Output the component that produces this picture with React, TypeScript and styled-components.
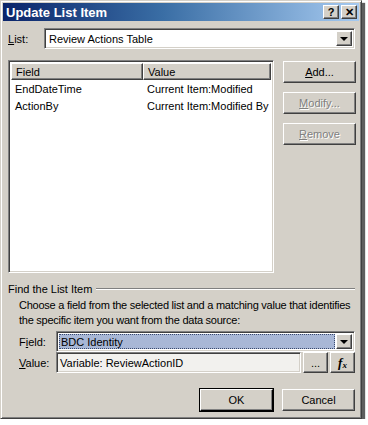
import React from 'react'
import styled, { createGlobalStyle, css } from 'styled-components'

const GlobalStyle = createGlobalStyle`
  html, body {
    margin: 0;
    padding: 0;
    background: #ffffff;
  }
  body {
    font-family: Tahoma, "Liberation Sans", Arial, sans-serif;
    font-size: 11px;
    color: #000;
  }
`

const raised = css`
  border: 1px solid;
  border-color: #ffffff #404040 #404040 #ffffff;
  box-shadow: inset -1px -1px 0 #808080, inset 1px 1px 0 #d4d0c8;
`

const sunken = css`
  border: 1px solid;
  border-color: #808080 #ffffff #ffffff #808080;
  box-shadow: inset 1px 1px 0 #404040, inset -1px -1px 0 #d4d0c8;
`

const Window = styled.div`
  width: 362px;
  height: 419px;
  box-sizing: border-box;
  background: #d4d0c8;
  border: 1px solid;
  border-color: #d4d0c8 #404040 #404040 #d4d0c8;
  box-shadow: inset 1px 1px 0 #ffffff, inset -1px -1px 0 #808080, 3px 3px 1px rgba(40, 40, 40, 0.75);
  padding: 2px;
  display: flex;
  flex-direction: column;
  overflow: hidden;
`

const TitleBar = styled.div`
  height: 18px;
  flex: none;
  background: linear-gradient(to right, #0a246a 0%, #3a6ea5 45%, #a6caf0 100%);
  display: flex;
  align-items: center;
  padding: 0 2px 0 3px;
`

const Title = styled.div`
  flex: 1;
  color: #ffffff;
  font-weight: bold;
  font-size: 13px;
`

const CaptionButton = styled.div`
  ${raised};
  width: 16px;
  height: 14px;
  box-sizing: border-box;
  margin-left: 2px;
  background: #d4d0c8;
  display: flex;
  align-items: center;
  justify-content: center;
  font-weight: bold;
  font-size: 11px;
  line-height: 1;
`

const Body = styled.div`
  flex: 1;
  display: flex;
  flex-direction: column;
  padding: 7px 4px 0 5px;
`

const Row = styled.div<{ $indent?: number; $top?: number }>`
  display: flex;
  align-items: center;
  padding-left: ${p => p.$indent ?? 0}px;
  margin-top: ${p => p.$top ?? 0}px;
`

const Label = styled.span<{ $width: number }>`
  width: ${p => p.$width}px;
  flex: none;
`

const U = styled.span`
  text-decoration: underline;
`

const Combo = styled.div`
  ${sunken};
  flex: 1;
  height: 21px;
  box-sizing: border-box;
  background: #ffffff;
  display: flex;
  align-items: center;
  padding: 2px;
`

const ComboText = styled.div<{ $selected?: boolean }>`
  flex: 1;
  align-self: stretch;
  display: flex;
  align-items: center;
  padding-left: 2px;
  ${p => p.$selected && css`
    background: #a8b7d6;
    outline: 1px dotted #3a4a70;
    outline-offset: -1px;
  `}
`

const DropButton = styled.div`
  ${raised};
  width: 16px;
  height: 15px;
  box-sizing: border-box;
  background: #d4d0c8;
  display: flex;
  align-items: center;
  justify-content: center;
  margin-left: 1px;
`

const Arrow = styled.div`
  width: 0;
  height: 0;
  border-left: 4px solid transparent;
  border-right: 4px solid transparent;
  border-top: 4px solid #000;
`

const Middle = styled.div`
  display: flex;
  margin-top: 11px;
  gap: 9px;
`

const ListView = styled.div`
  ${sunken};
  width: 266px;
  height: 213px;
  box-sizing: border-box;
  background: #ffffff;
  padding: 2px;
`

const HeaderRow = styled.div`
  display: flex;
  height: 17px;
`

const HeaderCell = styled.div<{ $width: number }>`
  ${raised};
  width: ${p => p.$width}px;
  box-sizing: border-box;
  background: #d4d0c8;
  padding-left: 4px;
  display: flex;
  align-items: center;
`

const ItemRow = styled.div`
  display: flex;
  height: 17px;
  align-items: center;
  &:first-of-type { margin-top: 2px; }
`

const ItemCell = styled.div<{ $width: number }>`
  width: ${p => p.$width}px;
  padding-left: 4px;
  white-space: nowrap;
`

const SideButtons = styled.div`
  display: flex;
  flex-direction: column;
  gap: 9px;
  padding-top: 1px;
`

const Button = styled.div<{ $width?: number; $disabled?: boolean; $default?: boolean }>`
  ${raised};
  width: ${p => p.$width ?? 73}px;
  height: 22px;
  box-sizing: border-box;
  background: #d4d0c8;
  display: flex;
  align-items: center;
  justify-content: center;
  color: ${p => (p.$disabled ? '#808080' : '#000')};
  text-shadow: ${p => (p.$disabled ? '1px 1px 0 #ffffff' : 'none')};
  ${p => p.$default && css`
    outline: 1px solid #000;
    outline-offset: 0;
    border-color: #ffffff #000 #000 #ffffff;
  `}
`

const GroupHead = styled.div`
  display: flex;
  align-items: center;
  margin-top: 10px;
`

const GroupLine = styled.div`
  flex: 1;
  height: 0;
  border-top: 1px solid #808080;
  border-bottom: 1px solid #ffffff;
  margin-left: 4px;
`

const Hint = styled.div`
  padding-left: 11px;
  margin-top: 3px;
  line-height: 15px;
  white-space: nowrap;
  letter-spacing: -0.25px;
`

const Input = styled.div`
  ${sunken};
  flex: 1;
  height: 21px;
  box-sizing: border-box;
  background: #f2f1ee;
  display: flex;
  align-items: center;
  padding-left: 3px;
`

const SmallButton = styled(Button)`
  width: 25px;
  height: 21px;
  margin-left: 2px;
`

const Fx = styled.span`
  font-family: "Liberation Serif", "DejaVu Serif", serif;
  font-style: italic;
  font-size: 13px;
  font-weight: bold;
  sub { font-size: 9px; vertical-align: -1px; }
`

const Footer = styled.div`
  display: flex;
  justify-content: flex-end;
  gap: 9px;
  margin-top: 16px;
`

const rows = [
  { field: 'EndDateTime', value: 'Current Item:Modified' },
  { field: 'ActionBy', value: 'Current Item:Modified By' },
]

const App = () => {
  return (
    <>
      <GlobalStyle />
      <Window>
        <TitleBar>
          <Title>Update List Item</Title>
          <CaptionButton>?</CaptionButton>
          <CaptionButton>✕</CaptionButton>
        </TitleBar>
        <Body>
          <Row>
            <Label $width={36}><U>L</U>ist:</Label>
            <Combo>
              <ComboText>Review Actions Table</ComboText>
              <DropButton><Arrow /></DropButton>
            </Combo>
          </Row>
          <Middle>
            <ListView>
              <HeaderRow>
                <HeaderCell $width={132}>Field</HeaderCell>
                <HeaderCell $width={128}>Value</HeaderCell>
              </HeaderRow>
              {rows.map(r => (
                <ItemRow key={r.field}>
                  <ItemCell $width={132}>{r.field}</ItemCell>
                  <ItemCell $width={128}>{r.value}</ItemCell>
                </ItemRow>
              ))}
            </ListView>
            <SideButtons>
              <Button><U>A</U>dd...</Button>
              <Button $disabled><U>M</U>odify...</Button>
              <Button $disabled><U>R</U>emove</Button>
            </SideButtons>
          </Middle>
          <GroupHead>
            Find the List Item
            <GroupLine />
          </GroupHead>
          <Hint>
            Choose a field from the selected list and a matching value that identifies
            <br />
            the specific item you want from the data source:
          </Hint>
          <Row $indent={11} $top={3}>
            <Label $width={37}>F<U>i</U>eld:</Label>
            <Combo>
              <ComboText $selected>BDC Identity</ComboText>
              <DropButton><Arrow /></DropButton>
            </Combo>
          </Row>
          <Row $indent={11} $top={0}>
            <Label $width={37}><U>V</U>alue:</Label>
            <Input>Variable: ReviewActionID</Input>
            <SmallButton>...</SmallButton>
            <SmallButton><Fx>f<sub>x</sub></Fx></SmallButton>
          </Row>
          <Footer>
            <Button $default>OK</Button>
            <Button>Cancel</Button>
          </Footer>
        </Body>
      </Window>
    </>
  )
}

export default App
